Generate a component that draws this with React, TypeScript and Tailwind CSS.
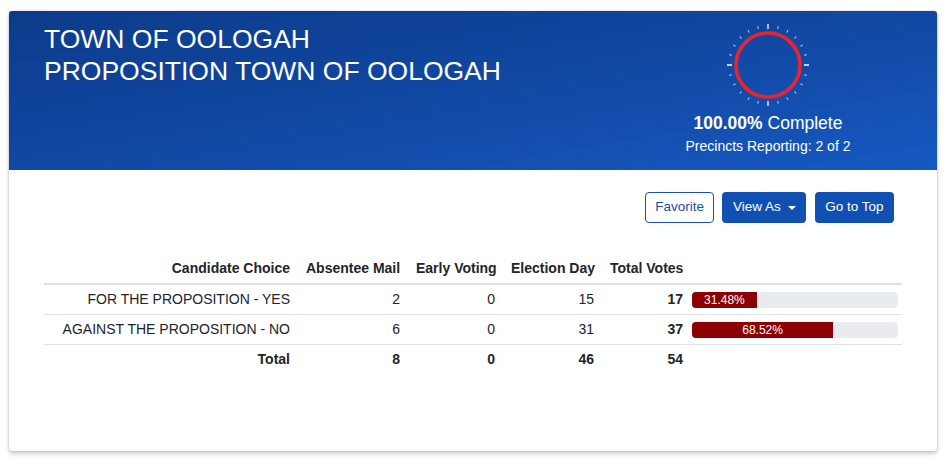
import React from "react";

const rows = [
  { name: "FOR THE PROPOSITION - YES", mail: 2, early: 0, day: 15, total: 17, pct: 31.48 },
  { name: "AGAINST THE PROPOSITION - NO", mail: 6, early: 0, day: 31, total: 37, pct: 68.52 },
];

function Dial() {
  const ticks = Array.from({ length: 24 }, (_, i) => i * 15);
  return (
    <svg width="90" height="90" viewBox="0 0 90 90">
      {ticks.map((deg) => {
        const major = deg % 90 === 0;
        const r1 = major ? 36 : 37.5;
        const r2 = major ? 41 : 40;
        const a = (deg * Math.PI) / 180;
        return (
          <line
            key={deg}
            x1={45 + r1 * Math.sin(a)}
            y1={45 - r1 * Math.cos(a)}
            x2={45 + r2 * Math.sin(a)}
            y2={45 - r2 * Math.cos(a)}
            stroke="white"
            strokeOpacity={major ? 1 : 0.7}
            strokeWidth={major ? 1.3 : 1.1}
          />
        );
      })}
      <circle cx="45" cy="45" r="32" fill="none" stroke="#ea2330" strokeWidth="3.6" />
    </svg>
  );
}

export default function App() {
  return (
    <div className="min-h-screen bg-white pt-[11px] pl-[9px] font-['Liberation_Sans',Arial,sans-serif] text-[#212529]">
      <div className="w-[928px] rounded-[3px] bg-white shadow-[0_0_2px_rgba(0,0,0,0.25),0_3px_4px_rgba(0,0,0,0.18)] overflow-hidden">
        {/* Header */}
        <div className="flex h-[159px] bg-gradient-to-br from-[#0c3b8a] via-[#1148a3] to-[#1659c1] text-white">
          <div className="flex-1 pl-[35px] pt-[13px]">
            <h1 className="text-[26.5px] leading-[31.5px] font-normal">
              TOWN OF OOLOGAH
              <br />
              PROPOSITION TOWN OF OOLOGAH
            </h1>
          </div>
          <div className="w-[220px] mr-[59px] pt-[8.5px] flex flex-col items-center">
            <Dial />
            <div className="mt-[2.5px] text-[17.5px] leading-[22px]">
              <span className="font-bold">100.00%</span> Complete
            </div>
            <div className="mt-[2px] text-[14px] leading-[20px]">Precincts Reporting: 2 of 2</div>
          </div>
        </div>

        {/* Body */}
        <div className="px-[35px] pt-[22px] pb-[77px]">
          <div className="flex justify-end gap-[8.5px] pr-[8px]">
            <button className="h-[31px] px-[9px] rounded-[4px] border border-[#1a50ad] text-[#1a4ea8] text-[13.5px] bg-white">
              Favorite
            </button>
            <button className="h-[31px] px-[10.5px] rounded-[4px] bg-[#1150b3] text-white text-[13.5px] flex items-center gap-[7px]">
              View As
              <span className="w-0 h-0 border-l-[4px] border-r-[4px] border-t-[4px] border-l-transparent border-r-transparent border-t-white" />
            </button>
            <button className="h-[31px] px-[10.5px] rounded-[4px] bg-[#1150b3] text-white text-[13.5px]">
              Go to Top
            </button>
          </div>

          <table className="mt-[31px] w-[858px] table-fixed border-collapse text-[14px] leading-[21px]">
            <colgroup>
              <col className="w-[254px]" />
              <col className="w-[110px]" />
              <col className="w-[95px]" />
              <col className="w-[99px]" />
              <col className="w-[89px]" />
              <col className="w-[211px]" />
            </colgroup>
            <thead>
              <tr className="border-b-[2px] border-[#dee2e6]">
                <th className="px-2 py-1 text-right font-bold">Candidate Choice</th>
                <th className="px-2 py-1 text-right font-bold whitespace-nowrap">Absentee Mail</th>
                <th className="px-2 py-1 text-right font-bold whitespace-nowrap">Early Voting</th>
                <th className="px-2 py-1 text-right font-bold whitespace-nowrap">Election Day</th>
                <th className="px-2 py-1 text-right font-bold whitespace-nowrap">Total Votes</th>
                <th />
              </tr>
            </thead>
            <tbody>
              {rows.map((r) => (
                <tr key={r.name} className="border-b border-[#dee2e6]">
                  <td className="px-2 py-1 text-right whitespace-nowrap">{r.name}</td>
                  <td className="px-2 py-1 text-right">{r.mail}</td>
                  <td className="px-2 py-1 text-right">{r.early}</td>
                  <td className="px-2 py-1 text-right">{r.day}</td>
                  <td className="px-2 py-1 text-right font-bold">{r.total}</td>
                  <td className="pl-[1px] pr-[4px] py-1 align-middle">
                    <div className="h-[16px] w-full rounded-[4px] bg-[#e9ecef] overflow-hidden flex">
                      <div
                        className="h-full bg-[#8b0000] text-white text-[12px] leading-[16px] text-center whitespace-nowrap"
                        style={{ width: `${r.pct}%` }}
                      >
                        {r.pct.toFixed(2)}%
                      </div>
                    </div>
                  </td>
                </tr>
              ))}
              <tr>
                <td className="px-2 py-1 text-right font-black">Total</td>
                <td className="px-2 py-1 text-right font-bold">8</td>
                <td className="px-2 py-1 text-right font-bold">0</td>
                <td className="px-2 py-1 text-right font-bold">46</td>
                <td className="px-2 py-1 text-right font-bold">54</td>
                <td />
              </tr>
            </tbody>
          </table>
        </div>
      </div>
    </div>
  );
}
